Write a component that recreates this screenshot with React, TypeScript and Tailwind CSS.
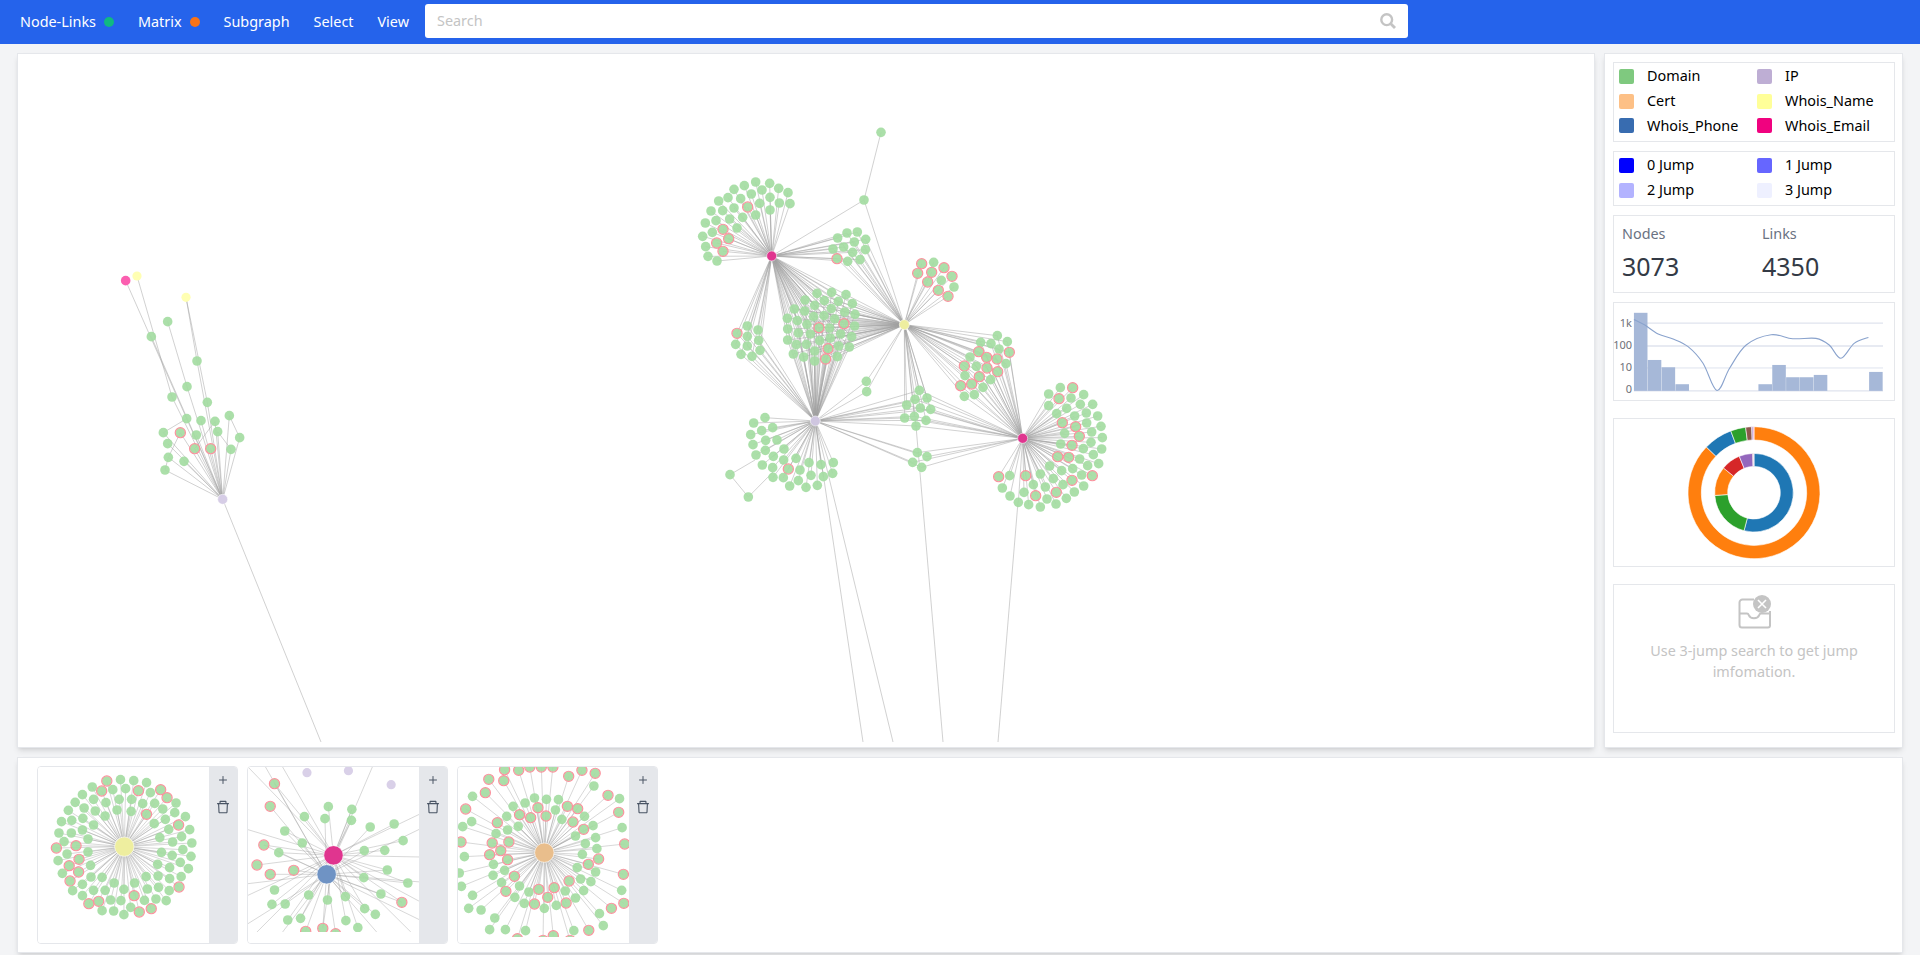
import { Plus } from "lucide-react";
import { AiOutlineDelete } from "react-icons/ai";

type Pt = number[];

const font = "'Noto Sans', 'Open Sans', sans-serif";

// --- main graph, coordinates read off a crop at (680,110) x3
const z = (x: number, y: number): [number, number] => [x / 3 + 680, y / 3 + 110];
const E1: Pt = [275, 438];
const YEL: Pt = [673, 644];
const IPH: Pt = [406, 933];
const E2: Pt = [1028, 985];

const clusters: { nodes: Pt[]; to: Pt[] }[] = [
  {
    to: [E1],
    nodes: [[227,216],[269,220],[193,227],[296,235],[162,238],[246,240],[324,248],[214,252],[116,273],[144,263],[182,266],[270,262],[239,280],[298,279],[330,281],[93,303],[128,302],[162,294],[203,291,1],[270,300],[227,315],[188,322],[76,339],[108,332],[149,327],[171,354],[129,358,1],[68,379],[97,367],[146,386,1],[110,399,1],[77,410],[129,424,1],[84,439],[111,453]],
  },
  {
    to: [E1, YEL],
    nodes: [[473,384],[501,369],[532,366],[557,388],[459,417],[491,411],[523,396],[556,419],[518,427],[471,446,1],[503,454],[540,449]],
  },
  {
    to: [YEL],
    nodes: [[725,461,1],[761,457],[792,473,1],[816,499,1],[713,490,1],[755,487,1],[743,516,1],[784,511],[822,531],[775,541,1],[804,559,1]],
  },
  {
    to: [E1, IPH],
    nodes: [[202,648],[234,660],[171,670,1],[202,679],[236,691],[167,703],[202,708],[240,721],[183,733],[216,739]],
  },
  {
    to: [E1, YEL, IPH],
    nodes: [[411,550],[455,547],[498,554],[375,570],[433,572],[475,574],[517,581],[343,597],[374,603],[404,586],[454,596],[494,606],[525,613],[322,625],[352,632],[401,620],[432,617],[464,627],[492,641,1],[524,648],[323,657],[381,643],[417,653,1],[449,654],[482,672],[515,680],[355,669],[391,672],[419,692],[451,684],[323,690],[349,704],[379,703],[444,716,1],[476,708],[508,711],[340,732],[404,723],[371,741],[404,753],[437,747,1],[472,740]],
  },
  { to: [YEL, IPH], nodes: [[559,814],[560,845]] },
  {
    to: [YEL, E2],
    nodes: [[952,677],[902,697],[933,701],[982,695],[957,717],[988,727,1],[896,725,1],[920,742,1],[951,747,1],[870,741],[978,761],[853,768,1],[889,769],[921,774,1],[953,785,1],[855,797],[898,800,1],[932,809],[842,827,1],[875,822,1],[909,832],[853,859],[883,854]],
  },
  {
    to: [IPH, E2, YEL],
    nodes: [[718,841],[705,868],[741,864],[680,885],[721,894],[752,898],[674,924],[703,919],[738,931],[708,948]],
  },
  { to: [IPH, E2], nodes: [[712,1028],[741,1040],[698,1057],[725,1072]] },
  {
    to: [IPH],
    nodes: [[255,923],[221,939],[278,953],[245,962],[212,974],[257,991],[291,990],[219,1004],[256,1021],[312,1017],[228,1035],[280,1039],[348,1045],[311,1050],[247,1065],[387,1058],[423,1064],[460,1058],[278,1073],[325,1077,1],[360,1080],[458,1090],[393,1096],[430,1100],[279,1102],[310,1103],[355,1112],[329,1128],[378,1132],[412,1126]],
  },
  {
    to: [E2],
    nodes: [[1141,833],[1178,833,1],[1106,852],[1211,854],[1137,866,1],[1173,864],[1106,887],[1201,883],[1238,883],[1160,895],[1130,911],[1184,918],[1219,909],[1253,918],[1147,938,1],[1187,950,1],[1220,939],[1263,949],[1154,970],[1198,979,1],[1235,966],[1267,983],[1142,1002],[1176,1006,1],[1233,997],[1210,1016],[1265,1017],[1133,1040,1],[1166,1042,1],[1199,1047],[1240,1034],[1256,1061],[1109,1068],[1145,1082],[1178,1076],[1223,1067],[1081,1092],[1205,1095],[1237,1097,1],[956,1100,1],[989,1097],[1037,1097,1],[1060,1124],[1120,1106],[1176,1111,1],[1149,1124],[1211,1128],[967,1134],[1096,1131],[1032,1147],[1129,1147,1],[1183,1146],[990,1158],[1067,1157,1],[1159,1165],[1101,1167],[1015,1177],[1046,1184],[1081,1191],[1128,1182]],
  },
];

const looseNodes: Pt[] = [[603,67],[552,270],[150,1094],[205,1161]];
const looseEdges: Pt[] = [
  [603,67,552,270],[552,270,275,438],[552,270,673,644],
  [150,1094,225,1050],[150,1094,205,1161],[205,1161,280,1085],
];

// left cluster, crop at (100,250) x3
const l = (x: number, y: number): [number, number] => [x / 3 + 100, y / 3 + 250];
const leftHub: Pt = [368, 748];
const leftNodes: Pt[] = [[203,215],[154,260],[291,333],[261,410],[216,441],[322,457],[388,497],[260,506],[303,512],[345,514],[190,548],[241,548,1],[353,545],[289,555],[419,563],[203,581],[284,596,1],[332,596,1],[393,598],[205,622],[252,634],[195,660]];
const leftEdges: Pt[] = [
  [77,92,260,506],[111,78,216,441],[258,142,322,457],[258,142,291,333],[203,215,261,410],[190,548,260,506],[388,497,419,563],[353,545,393,598],[241,548,205,622],[345,514,284,596],[195,660,205,622],
];

const downEdges: Pt[] = [
  [815.3,421,863,742],[815.3,421,893,742],[916,426,943,742],[1018,502,998,742],[222.7,499.3,321,742],
];

function Graph() {
  return (
    <svg viewBox="18 54 1576 693" className="block h-[693px] w-[1576px] blur-[0.3px]">
      <g stroke="#a0a0a0" strokeOpacity="0.65" strokeWidth="0.75">
        {clusters.flatMap((c, i) =>
          c.nodes.flatMap((n, j) =>
            c.to.map((h, k) => {
              const a = z(n[0], n[1]);
              const b = z(h[0], h[1]);
              return <line key={`${i}-${j}-${k}`} x1={a[0]} y1={a[1]} x2={b[0]} y2={b[1]} />;
            }),
          ),
        )}
        {looseEdges.map((e, i) => {
          const a = z(e[0], e[1]);
          const b = z(e[2], e[3]);
          return <line key={`le${i}`} x1={a[0]} y1={a[1]} x2={b[0]} y2={b[1]} />;
        })}
        {leftNodes.slice(4).map((n, i) => {
          const a = l(n[0], n[1]);
          const b = l(leftHub[0], leftHub[1]);
          return <line key={`ln${i}`} x1={a[0]} y1={a[1]} x2={b[0]} y2={b[1]} />;
        })}
        {leftEdges.map((e, i) => {
          const a = l(e[0], e[1]);
          const b = l(e[2], e[3]);
          return <line key={`lf${i}`} x1={a[0]} y1={a[1]} x2={b[0]} y2={b[1]} />;
        })}
        {[[154,260],[291,333],[261,410]].map((n, i) => {
          const a = l(n[0], n[1]);
          const b = l(leftHub[0], leftHub[1]);
          return <line key={`lx${i}`} x1={a[0]} y1={a[1]} x2={b[0]} y2={b[1]} />;
        })}
        {downEdges.map((e, i) => (
          <line key={`d${i}`} x1={e[0]} y1={e[1]} x2={e[2]} y2={e[3]} />
        ))}
      </g>
      {clusters.flatMap((c) => c.nodes).concat(looseNodes).map((n, i) => {
        const a = z(n[0], n[1]);
        return <Dot key={`n${i}`} x={a[0]} y={a[1]} red={!!n[2]} />;
      })}
      {leftNodes.map((n, i) => {
        const a = l(n[0], n[1]);
        return <Dot key={`m${i}`} x={a[0]} y={a[1]} red={!!n[2]} />;
      })}
      <Hub p={z(E1[0], E1[1])} fill="#e0358f" />
      <Hub p={z(YEL[0], YEL[1])} fill="#eeee9f" />
      <Hub p={z(IPH[0], IPH[1])} fill="#cfc6e0" />
      <Hub p={z(E2[0], E2[1])} fill="#e0358f" />
      <Hub p={l(leftHub[0], leftHub[1])} fill="#d6cde6" />
      <circle cx={l(77, 92)[0]} cy={l(77, 92)[1]} r="4.8" fill="#fb5fb0" />
      <circle cx={l(111, 78)[0]} cy={l(111, 78)[1]} r="4.6" fill="#ffffb3" />
      <circle cx={l(258, 142)[0]} cy={l(258, 142)[1]} r="4.6" fill="#ffffb3" />
    </svg>
  );
}

function Dot({ x, y, red, r = 4.8 }: { x: number; y: number; red: boolean; r?: number }) {
  return (
    <g>
      <circle cx={x} cy={y} r={r} fill="#a4dca2" fillOpacity="0.92" />
      {red && <circle cx={x} cy={y} r={r + 0.3} fill="none" stroke="#fa939e" strokeWidth="1.2" />}
    </g>
  );
}

function Hub({ p, fill }: { p: [number, number]; fill: string }) {
  return <circle cx={p[0]} cy={p[1]} r="5" fill={fill} stroke="#fff" strokeOpacity="0.7" strokeWidth="0.8" />;
}

// --- thumbnails, coordinates read off a crop scaled 2.34 wide, 3 high
const thumb1: Pt[] = [[249,92,1],[281,88],[312,91],[342,97],[215,110],[237,122,1],[263,118],[293,115],[323,121,1],[351,127],[375,118,1],[390,142,1],[192,133],[218,147],[247,157],[278,147],[307,147],[333,160],[361,159],[411,158],[175,156],[196,173],[222,182],[273,179],[306,183],[380,176],[408,187],[159,180],[245,197],[342,192,1],[433,199],[193,204],[386,207],[143,214],[167,210],[218,224],[360,220],[417,224,1],[192,239],[394,237],[443,238],[137,248],[166,248],[205,266],[373,262],[424,259],[149,274],[403,275],[448,278],[177,286,1],[131,293,1],[205,305],[377,306],[427,298],[156,311],[402,315],[446,318],[184,327,1],[135,331],[421,336],[161,346,1],[211,345],[368,342],[396,352],[440,355],[183,365,1],[145,369],[212,380],[238,381],[341,379],[369,377],[423,379],[396,385],[163,392,1],[192,402],[266,398],[314,398],[418,410,1],[370,411],[344,416],[169,421],[218,420],[245,420],[289,417],[395,421],[192,436],[313,436,1],[337,450],[364,446],[388,451],[207,460,1],[230,453,1],[258,449],[282,451],[305,471],[353,475,1],[238,481],[265,482],[325,485,1],[289,493]];

const thumb2: Pt[] = [[641,100,1],[631,168,1],[767,169],[822,177],[711,199],[759,205],[821,210],[865,230],[921,221],[665,242],[942,271],[706,278],[616,284,1],[851,301],[899,300],[651,307],[600,344,1],[686,360,1],[905,359],[631,372,1],[850,382],[953,398],[641,419],[721,434],[807,439],[890,431],[765,449],[939,456,1],[635,462],[666,461],[852,475],[877,492],[672,509],[702,504],[808,511],[714,543,1],[754,534,1],[784,550,1],[836,532]];
const thumb2Out: Pt[] = [[579,50],[620,50],[660,50],[870,50],[579,238],[579,400],[579,435],[579,520],[983,190],[983,235],[983,320],[983,395],[983,455],[983,510],[600,545],[660,545],[960,545],[880,545]];

const thumb3: Pt[] = [[1180,58,1],[1213,60,1],[1239,50,1],[1266,50,1],[1293,50,1],[1330,78,1],[1361,60,1],[1392,69,1],[1143,87,1],[1178,91,1],[1389,107],[1135,127,1],[1105,138],[1422,135,1],[1449,145],[1200,168],[1228,158],[1250,143],[1278,147],[1306,148],[1327,168,1],[1351,175,1],[1089,176,1],[1258,172,1],[1299,179],[1215,193,1],[1185,198],[1241,202,1],[1277,197,1],[1314,207],[1367,198],[1447,186,1],[1340,215,1],[1103,214],[1163,217,1],[1365,237,1],[1387,226],[1187,239],[1212,228],[1082,229],[1160,250],[1455,232],[1346,257],[1393,262],[1151,278,1],[1190,275,1],[1369,280],[1396,295],[1078,275,1],[1461,281,1],[1171,301,1],[1145,313,1],[1362,312],[1086,319],[1187,328,1],[1400,326,1],[1154,342],[1376,342,1],[1350,352],[1180,360],[1393,365],[1153,375],[1203,378,1],[1458,372,1],[1358,386],[1074,368],[1173,397],[1382,394],[1331,392,1],[1079,408],[1215,407],[1183,423,1],[1237,425],[1260,417,1],[1296,412,1],[1322,422],[1365,421],[1454,420],[1105,435],[1281,441,1],[1346,443],[1204,441],[1324,458,1],[1459,459,1],[1250,461,1],[1226,459],[1301,465],[1273,474],[1430,474,1],[1096,474],[1125,479],[1402,490],[1157,503],[1411,526],[1377,540,1],[1145,538],[1182,538],[1229,541],[1342,541],[1294,556,1],[1210,565,1],[1333,570,1],[1270,570,1]];

function Thumb({ x0, nodes, hubs, out = [], clipH }: { x0: number; nodes: Pt[]; hubs: { p: Pt; fill: string }[]; out?: Pt[]; clipH: number }) {
  const m = (x: number, y: number): [number, number] => [(x - x0) / 2.34, (y - 50) / 3];
  return (
    <div className="flex h-[178px] w-[201px] overflow-hidden rounded border border-gray-200">
      <div className="w-[171px] bg-white">
        <svg viewBox={`0 0 171 ${clipH}`} className="block w-[171px] blur-[0.5px]" style={{ height: clipH }}>
          <g stroke="#989898" strokeOpacity="0.7" strokeWidth="0.55">
            {nodes.map((n, i) => {
              const a = m(n[0], n[1]);
              const h = hubs[i % hubs.length].p;
              const b = m(h[0], h[1]);
              const h2 = hubs[(i + 1) % hubs.length].p;
              const c = m(h2[0], h2[1]);
              return (
                <g key={i}>
                  <line x1={a[0]} y1={a[1]} x2={b[0]} y2={b[1]} />
                  {hubs.length > 1 && i % 3 === 0 && <line x1={a[0]} y1={a[1]} x2={c[0]} y2={c[1]} />}
                </g>
              );
            })}
            {out.map((n, i) => {
              const a = m(n[0], n[1]);
              const h = hubs[i % hubs.length].p;
              const b = m(h[0], h[1]);
              return <line key={`o${i}`} x1={a[0]} y1={a[1]} x2={b[0]} y2={b[1]} />;
            })}
          </g>
          {nodes.map((n, i) => {
            const a = m(n[0], n[1]);
            return <Dot key={i} x={a[0]} y={a[1]} red={!!n[2]} r={4.8} />;
          })}
          {hubs.map((h, i) => {
            const a = m(h.p[0], h.p[1]);
            return <circle key={i} cx={a[0]} cy={a[1]} r="9.7" fill={h.fill} stroke="#fff" strokeOpacity="0.6" />;
          })}
          {x0 === 579 &&
            [[717,67],[814,61],[914,103]].map((n, i) => {
              const a = m(n[0], n[1]);
              return <circle key={i} cx={a[0]} cy={a[1]} r="4.6" fill="#d9d0e8" />;
            })}
        </svg>
      </div>
      <div className="flex w-[28px] flex-col items-center gap-[13px] bg-gray-200 pt-[7px] text-gray-600">
        <Plus size={12} strokeWidth={2} />
        <AiOutlineDelete size={16} />
      </div>
    </div>
  );
}

// --- side panel
function LegendItem({ color, label }: { color: string; label: string }) {
  return (
    <div className="flex h-[24.75px] items-center">
      <span className="mr-[13px] h-[15px] w-[15px] rounded-[2px]" style={{ backgroundColor: color }} />
      <span className="text-[14.4px] leading-none text-black">{label}</span>
    </div>
  );
}

const c2 = (x: number, y: number): [number, number] => [x / 3 + 1590, y / 3 + 40];
const bars: Pt[] = [[0,818],[1,960],[2,982],[3,1033],[9,1033],[10,975],[11,1012],[12,1012],[13,1005],[17,996]];
const curve: Pt[] = [[132,838],[165,855],[205,882],[250,897],[295,920],[340,970],[382,1052],[420,985],[470,915],[545,884],[610,896],[680,895],[720,915],[755,955],[795,910],[838,892]];

function smooth(pts: [number, number][]) {
  let d = `M${pts[0][0]} ${pts[0][1]}`;
  for (let i = 0; i < pts.length - 1; i++) {
    const p0 = pts[Math.max(i - 1, 0)];
    const p1 = pts[i];
    const p2 = pts[i + 1];
    const p3 = pts[Math.min(i + 2, pts.length - 1)];
    d += `C${p1[0] + (p2[0] - p0[0]) / 6} ${p1[1] + (p2[1] - p0[1]) / 6} ${p2[0] - (p3[0] - p1[0]) / 6} ${p2[1] - (p3[1] - p1[1]) / 6} ${p2[0]} ${p2[1]}`;
  }
  return d;
}

function Histogram() {
  return (
    <svg viewBox="1614 303 281 97" className="block h-[97px] w-[280px]">
      {[323, 346, 368, 391].map((y) => (
        <line key={y} x1="1634" x2="1884" y1={y} y2={y} stroke="#dfe3ee" strokeWidth={y === 368 ? 1 : 1.4} />
      ))}
      {bars.map((b) => {
        const x = c2(132 + b[0] * 41.65, b[1]);
        return <rect key={b[0]} x={x[0]} y={x[1]} width="13.6" height={391 - x[1]} fill="#a6b8d8" />;
      })}
      <path d={smooth(curve.map((p) => c2(p[0], p[1])))} fill="none" stroke="#8aa3cd" strokeWidth="1.1" />
      {[["1k", 327], ["100", 348.5], ["10", 371], ["0", 393]].map(([t, y]) => (
        <text key={t} x="1632" y={y} textAnchor="end" fontSize="11" fill="#6e7079" style={{ fontFamily: font }}>
          {t}
        </text>
      ))}
    </svg>
  );
}

function arc(cx: number, cy: number, R: number, r: number, a0: number, a1: number) {
  const p = (rad: number, a: number) => [cx + rad * Math.sin((a * Math.PI) / 180), cy - rad * Math.cos((a * Math.PI) / 180)];
  const large = a1 - a0 > 180 ? 1 : 0;
  const [x0, y0] = p(R, a0);
  const [x1, y1] = p(R, a1);
  const [x2, y2] = p(r, a1);
  const [x3, y3] = p(r, a0);
  return `M${x0} ${y0}A${R} ${R} 0 ${large} 1 ${x1} ${y1}L${x2} ${y2}A${r} ${r} 0 ${large} 0 ${x3} ${y3}Z`;
}

const outer: [number, number, string][] = [[0,313.8,"#ff7f0e"],[313.8,339.4,"#1f77b4"],[339.4,352.7,"#2ca02c"],[352.7,358,"#8c564b"],[358,359.2,"#9467bd"],[359.2,360,"#e377c2"]];
const inner: [number, number, string][] = [[0,194.7,"#1f77b4"],[194.7,266,"#2ca02c"],[266,309,"#ff7f0e"],[309,338,"#d62728"],[338,358,"#9467bd"],[358,359.2,"#8c564b"],[359.2,360,"#e377c2"]];

function Donut() {
  return (
    <svg viewBox="1614 419 280 147" className="block h-[147px] w-[280px]">
      <g stroke="#fff" strokeWidth="0.6">
        {outer.map((s) => (
          <path key={s[0]} d={arc(1754, 492.7, 66, 52.7, s[0], s[1])} fill={s[2]} />
        ))}
        {inner.map((s) => (
          <path key={s[0]} d={arc(1754, 492.7, 39.3, 26.3, s[0], s[1])} fill={s[2]} />
        ))}
      </g>
    </svg>
  );
}

function SearchIcon() {
  return (
    <svg viewBox="0 0 16 16" className="h-4 w-4" fill="none" stroke="#c4c4c4">
      <circle cx="6.7" cy="6.7" r="5.4" strokeWidth="2.4" />
      <path d="M10.8 10.8L15 15" strokeWidth="2.8" />
    </svg>
  );
}

function EmptyIcon() {
  return (
    <svg viewBox="0 0 34 34" className="h-[34px] w-[34px]" fill="none">
      <path d="M17 4.500H5.500a3 3 0 0 0-3 3V30a2.500 2.500 0 0 0 2.500 2.500h26a2 2 0 0 0 2-2V16" stroke="#c4c4c4" strokeWidth="2" />
      <path d="M2.500 18.500H10c1 0 1.400.6 1.800 1.600.8 2 2.600 3.200 5.200 3.200s4.400-1.200 5.200-3.200c.4-1 .8-1.600 1.800-1.600H33" stroke="#c4c4c4" strokeWidth="2" />
      <circle cx="25" cy="9" r="9" fill="#c4c4c4" />
      <path d="M21 5l8 8M29 5l-8 8" stroke="#fff" strokeWidth="1.6" />
    </svg>
  );
}

export default function App() {
  return (
    <div className="flex h-[955px] w-[1920px] flex-col overflow-hidden bg-gray-100" style={{ fontFamily: font }}>
      <header className="flex h-[44px] shrink-0 items-center bg-[#2563eb] pl-[20px] text-[14.4px] text-white">
        <span>Node-Links</span>
        <span className="ml-[8px] h-[10px] w-[10px] rounded-full bg-[#10b981]" />
        <span className="ml-[24px]">Matrix</span>
        <span className="ml-[8px] h-[10px] w-[10px] rounded-full bg-[#f97316]" />
        <span className="ml-[24px]">Subgraph</span>
        <span className="ml-[24px]">Select</span>
        <span className="ml-[24px]">View</span>
        <div className="mb-[2px] ml-[16px] flex h-[34px] w-[983px] items-center justify-between rounded-[3px] bg-white pl-[12px] pr-[12px]">
          <span className="text-[#c4c4c4]">Search</span>
          <SearchIcon />
        </div>
      </header>

      <main className="flex flex-1 flex-col gap-[9px] px-[17px] pt-[9px]">
        <div className="flex h-[695px] gap-[9px]">
          <section className="h-full w-[1578px] overflow-hidden border border-gray-200 bg-white shadow-md">
            <Graph />
          </section>
          <aside className="h-full w-[299px] border border-gray-200 bg-white pl-[8px] pr-[7px] pt-[8px] shadow-md">
            <div className="grid h-[80px] grid-cols-[138px_138px] content-start border border-gray-200 pl-[5px] pt-[1px]">
              <LegendItem color="#7fc97f" label="Domain" />
              <LegendItem color="#beaed4" label="IP" />
              <LegendItem color="#fdc086" label="Cert" />
              <LegendItem color="#ffff99" label="Whois_Name" />
              <LegendItem color="#386cb0" label="Whois_Phone" />
              <LegendItem color="#f0027f" label="Whois_Email" />
            </div>
            <div className="mt-[9px] grid h-[55px] grid-cols-[138px_138px] content-start border border-gray-200 pl-[5px] pt-[1px]">
              <LegendItem color="#0000ff" label="0 Jump" />
              <LegendItem color="#6666ff" label="1 Jump" />
              <LegendItem color="#b3b3ff" label="2 Jump" />
              <LegendItem color="#eef0ff" label="3 Jump" />
            </div>
            <div className="mt-[9px] grid h-[78px] grid-cols-[140px_134px] border border-gray-200 pl-[8px] pt-[8px]">
              <div>
                <div className="text-[14.4px] leading-[20px] text-gray-500">Nodes</div>
                <div className="mt-[6px] text-[25px] leading-[32px] text-[#333a45]">3073</div>
              </div>
              <div>
                <div className="text-[14.4px] leading-[20px] text-gray-500">Links</div>
                <div className="mt-[6px] text-[25px] leading-[32px] text-[#333a45]">4350</div>
              </div>
            </div>
            <div className="mt-[9px] h-[99px] border border-gray-200">
              <Histogram />
            </div>
            <div className="mt-[17px] h-[149px] border border-gray-200">
              <Donut />
            </div>
            <div className="mt-[17px] flex h-[149px] flex-col items-center border border-gray-200 px-[20px] pt-[10px] text-center text-[14.4px] leading-[21px] text-[#c4c4c4]">
              <EmptyIcon />
              <p className="mt-[11px]">Use 3-jump search to get jump imfomation.</p>
            </div>
          </aside>
        </div>

        <section className="flex h-[196px] gap-[9px] border border-gray-200 bg-white pl-[19px] pt-[8px] shadow-md">
          <Thumb x0={88} nodes={thumb1} hubs={[{ p: [290, 289], fill: "#eeee9f" }]} clipH={175} />
          <Thumb x0={579} nodes={thumb2} out={thumb2Out} hubs={[{ p: [779, 315], fill: "#e0358f" }, { p: [763, 372], fill: "#6f93c4" }]} clipH={165} />
          <Thumb x0={1071} nodes={thumb3} hubs={[{ p: [1273, 307], fill: "#e9be8c" }]} clipH={170} />
        </section>
      </main>
    </div>
  );
}
